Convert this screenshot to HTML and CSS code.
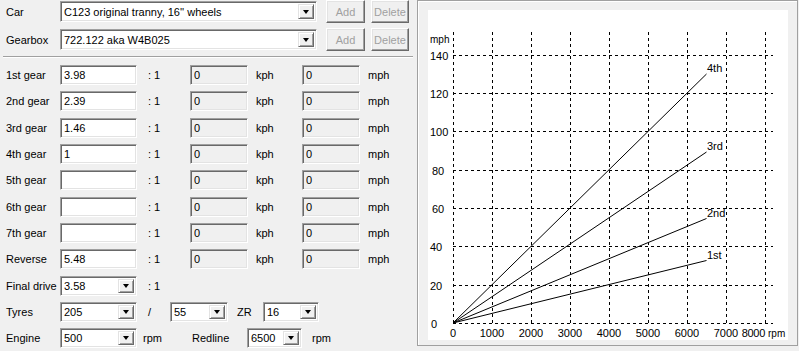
FILE: index.html
```html
<!DOCTYPE html>
<html lang="en">
<head>
  <meta charset="UTF-8">
  <title>Gear ratio calculator</title>
  <link rel="stylesheet" href="styles.css">
</head>
<body>
  <div class="app">
    <div class="form">
      <div class="row top">
        <span class="lbl">Car</span>
        <div class="combo car"><span class="val">C123 original tranny, 16'' wheels</span><span class="drop"></span></div>
        <button class="btn add" disabled>Add</button>
        <button class="btn del" disabled>Delete</button>
      </div>
      <div class="row top">
        <span class="lbl">Gearbox</span>
        <div class="combo car"><span class="val">722.122 aka W4B025</span><span class="drop"></span></div>
        <button class="btn add" disabled>Add</button>
        <button class="btn del" disabled>Delete</button>
      </div>

      <div class="sep"></div>

      <div class="gears">
        <div class="row gear">
          <span class="lbl">1st gear</span>
          <input class="field ratio" value="3.98">
          <span class="unit colon">: 1</span>
          <input class="field ro" value="0" readonly>
          <span class="unit kph">kph</span>
          <input class="field ro" value="0" readonly>
          <span class="unit mph">mph</span>
        </div>
        <div class="row gear">
          <span class="lbl">2nd gear</span>
          <input class="field ratio" value="2.39">
          <span class="unit colon">: 1</span>
          <input class="field ro" value="0" readonly>
          <span class="unit kph">kph</span>
          <input class="field ro" value="0" readonly>
          <span class="unit mph">mph</span>
        </div>
        <div class="row gear">
          <span class="lbl">3rd gear</span>
          <input class="field ratio" value="1.46">
          <span class="unit colon">: 1</span>
          <input class="field ro" value="0" readonly>
          <span class="unit kph">kph</span>
          <input class="field ro" value="0" readonly>
          <span class="unit mph">mph</span>
        </div>
        <div class="row gear">
          <span class="lbl">4th gear</span>
          <input class="field ratio" value="1">
          <span class="unit colon">: 1</span>
          <input class="field ro" value="0" readonly>
          <span class="unit kph">kph</span>
          <input class="field ro" value="0" readonly>
          <span class="unit mph">mph</span>
        </div>
        <div class="row gear">
          <span class="lbl">5th gear</span>
          <input class="field ratio" value="">
          <span class="unit colon">: 1</span>
          <input class="field ro" value="0" readonly>
          <span class="unit kph">kph</span>
          <input class="field ro" value="0" readonly>
          <span class="unit mph">mph</span>
        </div>
        <div class="row gear">
          <span class="lbl">6th gear</span>
          <input class="field ratio" value="">
          <span class="unit colon">: 1</span>
          <input class="field ro" value="0" readonly>
          <span class="unit kph">kph</span>
          <input class="field ro" value="0" readonly>
          <span class="unit mph">mph</span>
        </div>
        <div class="row gear">
          <span class="lbl">7th gear</span>
          <input class="field ratio" value="">
          <span class="unit colon">: 1</span>
          <input class="field ro" value="0" readonly>
          <span class="unit kph">kph</span>
          <input class="field ro" value="0" readonly>
          <span class="unit mph">mph</span>
        </div>
        <div class="row gear">
          <span class="lbl">Reverse</span>
          <input class="field ratio" value="5.48">
          <span class="unit colon">: 1</span>
          <input class="field ro" value="0" readonly>
          <span class="unit kph">kph</span>
          <input class="field ro" value="0" readonly>
          <span class="unit mph">mph</span>
        </div>

        <div class="row gear">
          <span class="lbl">Final drive</span>
          <div class="combo small"><span class="val">3.58</span><span class="drop"></span></div>
          <span class="unit colon">: 1</span>
        </div>
        <div class="row gear">
          <span class="lbl">Tyres</span>
          <div class="combo small"><span class="val">205</span><span class="drop"></span></div>
          <span class="unit slash">/</span>
          <div class="combo profile"><span class="val">55</span><span class="drop"></span></div>
          <span class="unit zr">ZR</span>
          <div class="combo rim"><span class="val">16</span><span class="drop"></span></div>
        </div>
        <div class="row gear">
          <span class="lbl">Engine</span>
          <div class="combo small"><span class="val">500</span><span class="drop"></span></div>
          <span class="unit rpm">rpm</span>
          <span class="unit redline">Redline</span>
          <div class="combo redl"><span class="val">6500</span><span class="drop"></span></div>
          <span class="unit rpm2">rpm</span>
        </div>
      </div>
    </div>

    <div class="chart-panel">
      <div class="chart">
        <svg width="360" height="330" viewBox="0 0 360 330">
          <g class="grid">
            <line x1="25.5" y1="22" x2="25.5" y2="313"/>
            <line x1="64.5" y1="22" x2="64.5" y2="313"/>
            <line x1="103.5" y1="22" x2="103.5" y2="313"/>
            <line x1="142.5" y1="22" x2="142.5" y2="313"/>
            <line x1="181.5" y1="22" x2="181.5" y2="313"/>
            <line x1="220.5" y1="22" x2="220.5" y2="313"/>
            <line x1="259.5" y1="22" x2="259.5" y2="313"/>
            <line x1="298.5" y1="22" x2="298.5" y2="313"/>
            <line x1="337.5" y1="22" x2="337.5" y2="313"/>
            <line x1="25" y1="313.5" x2="345" y2="313.5"/>
            <line x1="25" y1="275.5" x2="345" y2="275.5"/>
            <line x1="25" y1="236.5" x2="345" y2="236.5"/>
            <line x1="25" y1="198.5" x2="345" y2="198.5"/>
            <line x1="25" y1="160.5" x2="345" y2="160.5"/>
            <line x1="25" y1="121.5" x2="345" y2="121.5"/>
            <line x1="25" y1="83.5" x2="345" y2="83.5"/>
            <line x1="25" y1="45.5" x2="345" y2="45.5"/>
          </g>
          <g class="curves">
            <line x1="25" y1="313" x2="278.5" y2="64"/>
            <line x1="25" y1="313" x2="278.5" y2="142"/>
            <line x1="25" y1="313" x2="278.5" y2="208.5"/>
            <line x1="25" y1="313" x2="278.5" y2="250.5"/>
          </g>
          <g class="labels">
            <text x="2" y="33" class="unit-lbl">mph</text>
            <text x="2" y="50">140</text>
            <text x="2" y="88">120</text>
            <text x="2" y="126">100</text>
            <text x="4" y="165">80</text>
            <text x="4" y="203">60</text>
            <text x="2" y="241">40</text>
            <text x="2" y="280">20</text>
            <text x="3" y="318">0</text>
          </g>
          <g class="labels xl">
            <text x="25" y="327">0</text>
            <text x="64" y="327">1000</text>
            <text x="103" y="327">2000</text>
            <text x="142" y="327">3000</text>
            <text x="181" y="327">4000</text>
            <text x="220" y="327">5000</text>
            <text x="259" y="327">6000</text>
            <text x="298" y="327">7000</text>
          </g>
          <text x="337" y="327" class="last">8000</text>
          <text x="340" y="327" class="unit-lbl">rpm</text>
          <g class="labels">
            <text x="279" y="62">4th</text>
            <text x="279" y="140">3rd</text>
            <text x="279" y="207">2nd</text>
            <text x="279" y="249">1st</text>
          </g>
        </svg>
      </div>
    </div>
  </div>
</body>
</html>
```

FILE: styles.css
```css
* {
  box-sizing: border-box;
}

body {
  margin: 0;
  background-color: #f0f0f0;
  color: #000;
  font-family: "Liberation Sans", Arial, sans-serif;
  font-size: 11px;
}

.app {
  display: flex;
  width: 799px;
  height: 351px;
  overflow: hidden;
}

/* left form */
.form {
  width: 417px;
  flex-shrink: 0;
}

.row {
  display: flex;
  align-items: center;
}

.row.top {
  height: 23px;
  margin-bottom: 5px;
}

.lbl {
  width: 60px;
  padding-left: 6px;
  flex-shrink: 0;
}

.sep {
  margin: 3px 4px 0 3px;
  height: 2px;
  border-top: 1px solid #a0a0a0;
  border-bottom: 1px solid #fff;
}

.gears {
  padding-top: 4px;
}

.row.gear {
  height: 26.3px;
}

.field {
  height: 20px;
  margin: 0;
  padding: 0 0 0 3px;
  font: inherit;
  color: #000;
  background-color: #fff;
  border: 1px solid;
  border-color: #a0a0a0 #fff #fff #a0a0a0;
  box-shadow: inset 1px 1px 0 #696969, inset -1px -1px 0 #e3e3e3;
  outline: none;
}

.field.ratio {
  width: 77px;
}

.field.ro {
  width: 58px;
  background-color: #f0f0f0;
}

.unit {
  flex-shrink: 0;
}

.colon {
  width: 53px;
  padding-left: 11px;
}

.kph {
  width: 54px;
  padding-left: 8px;
}

.mph {
  padding-left: 8px;
}

.slash {
  width: 33px;
  padding-left: 11px;
}

.zr {
  width: 35px;
  padding-left: 9px;
}

.rpm {
  width: 55px;
  padding-left: 6px;
}

.redline {
  width: 55px;
}

.rpm2 {
  padding-left: 10px;
}

/* combo boxes */
.combo {
  display: flex;
  align-items: center;
  height: 21px;
  background-color: #fff;
  border: 1px solid;
  border-color: #a0a0a0 #fff #fff #a0a0a0;
  box-shadow: inset 1px 1px 0 #696969, inset -1px -1px 0 #e3e3e3;
  padding: 2px;
  flex-shrink: 0;
}

.combo.car {
  width: 257px;
}

.combo.small {
  width: 77px;
  height: 20px;
}

.combo.profile {
  width: 58px;
  height: 20px;
}

.combo.rim {
  width: 56px;
  height: 20px;
}

.combo.redl {
  width: 55px;
  height: 20px;
}

.combo .val {
  flex: 1;
  padding-left: 1px;
  white-space: nowrap;
  overflow: hidden;
}

.combo .drop {
  position: relative;
  width: 16px;
  height: 100%;
  background-color: #f0f0f0;
  border: 1px solid;
  border-color: #e3e3e3 #696969 #696969 #e3e3e3;
  box-shadow: inset 1px 1px 0 #fff, inset -1px -1px 0 #a0a0a0;
}

.combo .drop::after {
  content: "";
  position: absolute;
  left: 4px;
  top: 50%;
  margin-top: -2px;
  border-left: 3.5px solid transparent;
  border-right: 3.5px solid transparent;
  border-top: 4px solid #000;
}

/* buttons */
.btn {
  height: 23px;
  padding: 0;
  font: inherit;
  color: #a0a0a0;
  background-color: #f0f0f0;
  border: 1px solid;
  border-color: #fff #696969 #696969 #fff;
  box-shadow: inset -1px -1px 0 #a0a0a0, inset 1px 1px 0 #e3e3e3;
}

.btn.add {
  width: 39px;
  margin-left: 9px;
}

.btn.del {
  width: 38px;
  margin-left: 6px;
}

/* chart */
.chart-panel {
  width: 381px;
  height: 346px;
  padding: 9px 8px 4px 10px;
  border: 1px solid #a0a0a0;
  box-shadow: inset 1px 1px 0 #fff;
}

.chart {
  width: 360px;
  height: 330px;
  background-color: #fff;
}

.chart svg {
  display: block;
}

.grid line {
  stroke: #000;
  stroke-width: 1;
  stroke-dasharray: 3 3;
}

.curves line {
  stroke: #000;
  stroke-width: 1;
}

.chart text {
  font-family: "Liberation Sans", Arial, sans-serif;
  font-size: 11px;
  fill: #000;
}

.chart .xl text {
  text-anchor: middle;
}

.chart text.last {
  text-anchor: end;
  letter-spacing: -0.3px;
}

.chart .unit-lbl {
  font-size: 10px;
}
```
